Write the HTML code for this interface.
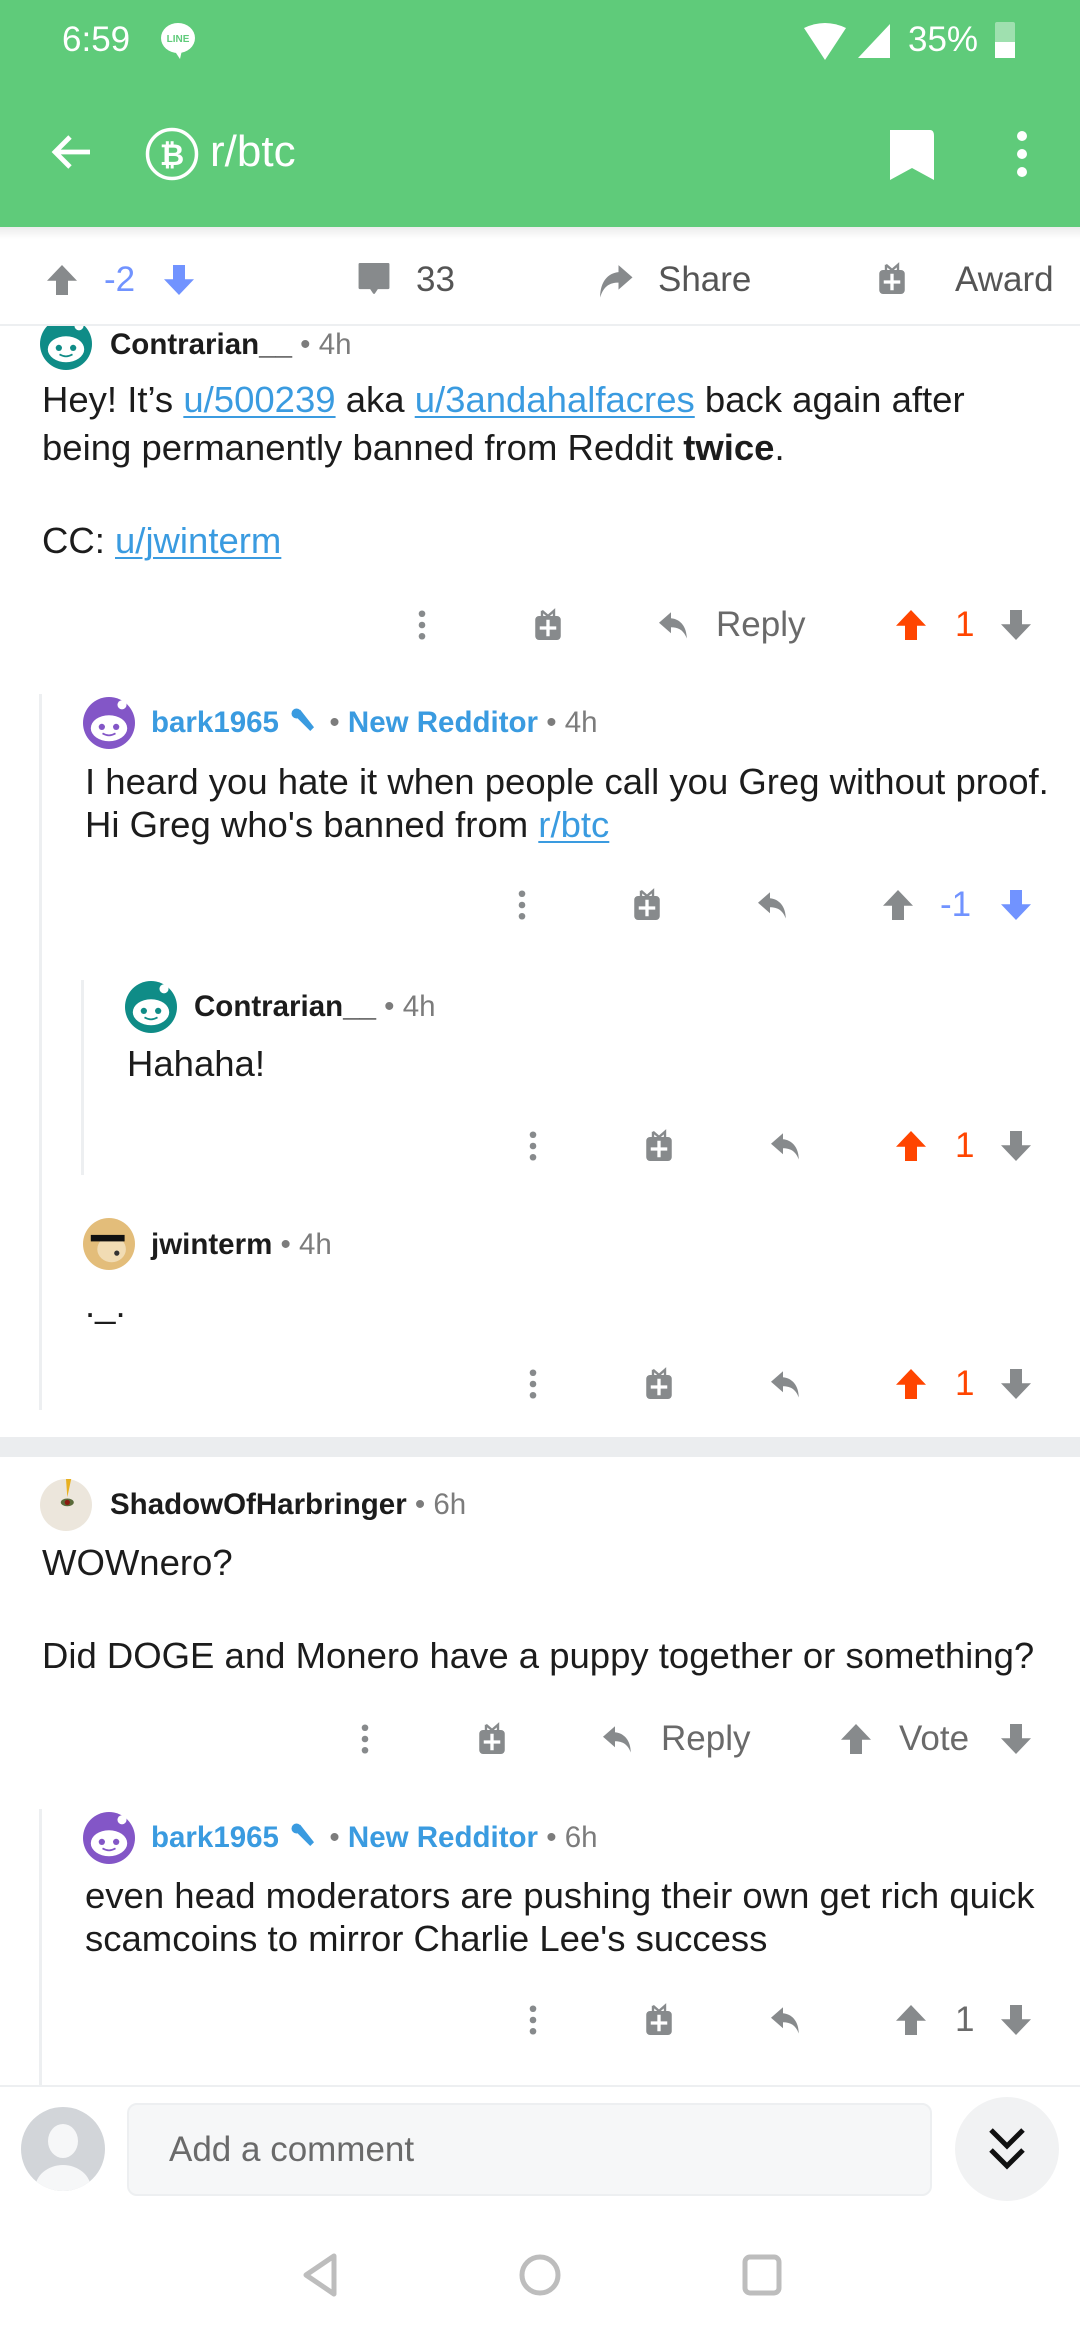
<!DOCTYPE html>
<html><head><meta charset="utf-8">
<style>
*{margin:0;padding:0;box-sizing:border-box}
body{width:1080px;height:2340px;position:relative;overflow:hidden;background:#fff;font-family:"Liberation Sans",Roboto,sans-serif;color:#1c1c1c}
.a{position:absolute;white-space:nowrap}
.t{position:absolute;white-space:nowrap;line-height:48px;font-size:36.5px}
.ab{font-size:35px}
.n{position:absolute;white-space:nowrap;line-height:40px;font-size:29.5px;font-weight:bold;color:#1c1c1c}
.n .g{font-weight:normal;color:#7c7c7c}
.n .b{color:#3a9be0}
a{color:#3a9be0;text-decoration:underline;text-decoration-thickness:2px;text-underline-offset:4px}
.ic{position:absolute;width:36px;height:36px}
.vl{position:absolute;width:3px;background:#edeff1}
</style></head><body>
<svg width="0" height="0" style="position:absolute">
<defs>
<symbol id="up" viewBox="0 0 24 24"><path d="M12 2 L22 12.5 H16 V22 H8 V12.5 H2 Z"/></symbol>
<symbol id="dn" viewBox="0 0 24 24"><path d="M12 22 L22 11.5 H16 V2 H8 V11.5 H2 Z"/></symbol>
<symbol id="gift" viewBox="0 0 24 24"><path d="M8 2.5 L12 6 L16 2.5 V6 M8 2.5 V6" fill="none" stroke="currentColor" stroke-width="1.6"/><rect x="3.5" y="6" width="17" height="16" rx="2.5"/><path d="M12 8.5 V19.5 M6.5 14 H17.5" stroke="#fff" stroke-width="2.2"/></symbol>
<symbol id="rep" viewBox="0 0 24 24"><path d="M10 3.5 L2 10.5 L10 17.5 V13.5 C15 13.5 18.5 15.5 20.5 21 C20.5 13 16 8 10 7.5 Z"/></symbol>
<symbol id="dots" viewBox="0 0 24 24"><circle cx="12" cy="4.5" r="2.2"/><circle cx="12" cy="12" r="2.2"/><circle cx="12" cy="19.5" r="2.2"/></symbol>
<symbol id="snoo" viewBox="0 0 40 40"><ellipse cx="20" cy="24" rx="14" ry="10" fill="#fff"/><circle cx="14.5" cy="23" r="2.4" fill="currentColor"/><circle cx="25.5" cy="23" r="2.4" fill="currentColor"/><path d="M15 28 Q20 31 25 28" fill="none" stroke="currentColor" stroke-width="1.3"/><circle cx="30" cy="6" r="3.5" fill="#fff"/></symbol>
</defs></svg>

<!-- header -->
<div class="a" style="left:0;top:0;width:1080px;height:227px;background:#5fcb7a"></div>
<div class="a" style="left:62px;top:20px;font-size:35px;line-height:40px;color:#fff">6:59</div>
<svg class="a" style="left:160px;top:22px" width="36" height="38" viewBox="0 0 36 38"><ellipse cx="18" cy="16" rx="17" ry="15" fill="#fff"/><path d="M14 28 L20 37 L22 28Z" fill="#fff"/><text x="18" y="20" font-size="10" text-anchor="middle" fill="#5fcb7a" font-family="Liberation Sans" font-weight="bold">LINE</text></svg>
<svg class="a" style="left:800px;top:22px" width="50" height="40" viewBox="0 0 50 40"><path d="M4 6 Q25 -4 46 6 L25 38 Z" fill="#fff"/></svg>
<svg class="a" style="left:856px;top:22px" width="36" height="38" viewBox="0 0 36 38"><path d="M34 2 V36 H2 Z" fill="#fff"/></svg>
<div class="a" style="left:908px;top:20px;font-size:35px;line-height:40px;color:#fff">35%</div>
<div class="a" style="left:995px;top:22px;width:20px;height:36px;background:rgba(255,255,255,.4);border-radius:2px"></div>
<div class="a" style="left:995px;top:42px;width:20px;height:16px;background:#fff"></div>

<svg class="a" style="left:48px;top:128px" width="48" height="48" viewBox="0 0 24 24"><path d="M21 12 H4 M11 4.5 L3.5 12 L11 19.5" fill="none" stroke="#fff" stroke-width="2.4"/></svg>
<svg class="a" style="left:145px;top:127px" width="54" height="54" viewBox="0 0 54 54"><circle cx="27" cy="27" r="24.5" fill="none" stroke="#fff" stroke-width="3.5"/><text x="27" y="38" font-size="30" font-weight="bold" text-anchor="middle" fill="#fff" font-family="Liberation Sans">₿</text></svg>
<div class="a" style="left:210px;top:126px;font-size:44px;line-height:52px;color:#fff">r/btc</div>
<svg class="a" style="left:888px;top:128px" width="46" height="52" viewBox="0 0 46 52"><path d="M2 2 H42 Q46 2 46 8 V52 L24 40 L2 52 Z" fill="#fff"/></svg>
<svg class="a" style="left:1010px;top:130px" width="24" height="48" viewBox="0 0 24 48"><circle cx="12" cy="6" r="5" fill="#fff"/><circle cx="12" cy="24" r="5" fill="#fff"/><circle cx="12" cy="42" r="5" fill="#fff"/></svg>

<!-- post action bar -->
<div class="a" style="left:0;top:227px;width:1080px;height:12px;background:linear-gradient(#ececec,#fff)"></div>
<svg class="ic" style="left:44px;top:262px;color:#878a8c;fill:#878a8c"><use href="#up"/></svg>
<div class="t ab" style="left:104px;top:256px;color:#7193ff">-2</div>
<svg class="ic" style="left:161px;top:262px;fill:#7193ff"><use href="#dn"/></svg>
<svg class="a" style="left:355px;top:260px" width="38" height="40" viewBox="0 0 24 24"><path d="M3 2 H21 V17 H14 L12 20 L10 17 H3 Z" fill="#878a8c" stroke="#878a8c" stroke-linejoin="round" stroke-width="1.5"/></svg>
<div class="t ab" style="left:416px;top:256px;color:#555">33</div>
<svg class="a" style="left:594px;top:258px;fill:#878a8c;transform:scaleX(-1)" width="42" height="44" viewBox="0 0 24 24"><path d="M10 3.5 L2 10.5 L10 17.5 V13.5 C15 13.5 18.5 15.5 20.5 22 C20.5 13 16 8 10 7.5 Z"/></svg>
<div class="t ab" style="left:658px;top:256px;color:#555">Share</div>
<svg class="ic" style="left:874px;top:261px;color:#878a8c;fill:#878a8c"><use href="#gift"/></svg>
<div class="t ab" style="left:955px;top:256px;color:#555">Award</div>
<div class="a" style="left:0;top:324px;width:1080px;height:2px;background:#edeff1"></div>

<!-- content -->
<div class="a" style="left:0;top:326px;width:1080px;height:1759px;overflow:hidden">
<div class="a" style="left:0;top:-326px;width:1080px;height:2400px">

<!-- comment 1 -->
<svg class="a" style="left:40px;top:318px;color:#0f8c87" width="52" height="52" viewBox="0 0 40 40"><circle cx="20" cy="20" r="20" fill="#0f8c87"/><use href="#snoo"/></svg>
<div class="n" style="left:110px;top:325px">Contrarian__ <span class="g">• 4h</span></div>
<div class="t" style="left:42px;top:376px">Hey! It’s <a>u/500239</a> aka <a>u/3andahalfacres</a> back again after</div>
<div class="t" style="left:42px;top:424px">being permanently banned from Reddit <b>twice</b>.</div>
<div class="t" style="left:42px;top:517px">CC: <a>u/jwinterm</a></div>
<svg class="ic" style="left:404px;top:607px;fill:#878a8c"><use href="#dots"/></svg>
<svg class="ic" style="left:530px;top:607px;color:#878a8c;fill:#878a8c"><use href="#gift"/></svg>
<svg class="ic" style="left:656px;top:607px;fill:#878a8c"><use href="#rep"/></svg>
<div class="t ab" style="left:716px;top:601px;color:#6a6a6a">Reply</div>
<svg class="ic" style="left:893px;top:607px;fill:#ff4500"><use href="#up"/></svg>
<div class="t ab" style="left:955px;top:601px;color:#ff4500">1</div>
<svg class="ic" style="left:998px;top:607px;fill:#878a8c"><use href="#dn"/></svg>

<div class="vl" style="left:39px;top:694px;height:716px"></div>
<!-- bark1965 -->
<svg class="a" style="left:83px;top:697px;color:#8356c7" width="52" height="52" viewBox="0 0 40 40"><circle cx="20" cy="20" r="20" fill="#8356c7"/><use href="#snoo"/></svg>
<div class="n" style="left:151px;top:703px"><span class="b">bark1965</span> <svg width="34" height="30" viewBox="0 0 24 24" style="vertical-align:-4px"><path d="M4 5 L9 3 L20 17 L17 20 L6 9 Z" fill="#3a9be0"/><circle cx="6" cy="6" r="4" fill="#3a9be0"/></svg><span class="g"> • </span><span class="b">New Redditor</span><span class="g"> • 4h</span></div>
<div class="t" style="left:85px;top:758px">I heard you hate it when people call you Greg without proof.</div>
<div class="t" style="left:85px;top:801px">Hi Greg who's banned from <a>r/btc</a></div>
<svg class="ic" style="left:504px;top:887px;fill:#878a8c"><use href="#dots"/></svg>
<svg class="ic" style="left:629px;top:887px;color:#878a8c;fill:#878a8c"><use href="#gift"/></svg>
<svg class="ic" style="left:755px;top:887px;fill:#878a8c"><use href="#rep"/></svg>
<svg class="ic" style="left:880px;top:887px;fill:#878a8c"><use href="#up"/></svg>
<div class="t ab" style="left:940px;top:881px;color:#7193ff">-1</div>
<svg class="ic" style="left:998px;top:887px;fill:#7193ff"><use href="#dn"/></svg>

<div class="vl" style="left:81px;top:980px;height:195px"></div>
<!-- Contrarian nested -->
<svg class="a" style="left:125px;top:981px;color:#0f8c87" width="52" height="52" viewBox="0 0 40 40"><circle cx="20" cy="20" r="20" fill="#0f8c87"/><use href="#snoo"/></svg>
<div class="n" style="left:194px;top:987px">Contrarian__ <span class="g">• 4h</span></div>
<div class="t" style="left:127px;top:1040px">Hahaha!</div>
<svg class="ic" style="left:515px;top:1128px;fill:#878a8c"><use href="#dots"/></svg>
<svg class="ic" style="left:641px;top:1128px;color:#878a8c;fill:#878a8c"><use href="#gift"/></svg>
<svg class="ic" style="left:768px;top:1128px;fill:#878a8c"><use href="#rep"/></svg>
<svg class="ic" style="left:893px;top:1128px;fill:#ff4500"><use href="#up"/></svg>
<div class="t ab" style="left:955px;top:1122px;color:#ff4500">1</div>
<svg class="ic" style="left:998px;top:1128px;fill:#878a8c"><use href="#dn"/></svg>

<!-- jwinterm -->
<svg class="a" style="left:83px;top:1218px" width="52" height="52" viewBox="0 0 40 40"><circle cx="20" cy="20" r="20" fill="#e3bd7a"/><ellipse cx="22" cy="24" rx="11" ry="10" fill="#f1dcb4"/><rect x="6" y="13" width="26" height="5" fill="#111"/><circle cx="26" cy="27" r="2" fill="#333"/></svg>
<div class="n" style="left:151px;top:1225px">jwinterm <span class="g">• 4h</span></div>
<div class="t" style="left:85px;top:1281px">._.</div>
<svg class="ic" style="left:515px;top:1366px;fill:#878a8c"><use href="#dots"/></svg>
<svg class="ic" style="left:641px;top:1366px;color:#878a8c;fill:#878a8c"><use href="#gift"/></svg>
<svg class="ic" style="left:768px;top:1366px;fill:#878a8c"><use href="#rep"/></svg>
<svg class="ic" style="left:893px;top:1366px;fill:#ff4500"><use href="#up"/></svg>
<div class="t ab" style="left:955px;top:1360px;color:#ff4500">1</div>
<svg class="ic" style="left:998px;top:1366px;fill:#878a8c"><use href="#dn"/></svg>

<div class="a" style="left:0;top:1437px;width:1080px;height:20px;background:#ebedef"></div>

<!-- Shadow -->
<svg class="a" style="left:40px;top:1479px" width="52" height="52" viewBox="0 0 40 40"><circle cx="20" cy="20" r="20" fill="#ece6dc"/><path d="M20 0 L24 0 L21 14 Z" fill="#e8b020"/><ellipse cx="21" cy="18" rx="5" ry="3" fill="#5a6a3a"/><circle cx="21" cy="18" r="2" fill="#8a1a10"/></svg>
<div class="n" style="left:110px;top:1485px">ShadowOfHarbringer <span class="g">• 6h</span></div>
<div class="t" style="left:42px;top:1539px">WOWnero?</div>
<div class="t" style="left:42px;top:1632px">Did DOGE and Monero have a puppy together or something?</div>
<svg class="ic" style="left:347px;top:1721px;fill:#878a8c"><use href="#dots"/></svg>
<svg class="ic" style="left:474px;top:1721px;color:#878a8c;fill:#878a8c"><use href="#gift"/></svg>
<svg class="ic" style="left:600px;top:1721px;fill:#878a8c"><use href="#rep"/></svg>
<div class="t ab" style="left:661px;top:1715px;color:#6a6a6a">Reply</div>
<svg class="ic" style="left:838px;top:1721px;fill:#878a8c"><use href="#up"/></svg>
<div class="t ab" style="left:899px;top:1715px;color:#6a6a6a">Vote</div>
<svg class="ic" style="left:998px;top:1721px;fill:#878a8c"><use href="#dn"/></svg>

<div class="vl" style="left:39px;top:1809px;height:300px"></div>
<svg class="a" style="left:83px;top:1812px;color:#8356c7" width="52" height="52" viewBox="0 0 40 40"><circle cx="20" cy="20" r="20" fill="#8356c7"/><use href="#snoo"/></svg>
<div class="n" style="left:151px;top:1818px"><span class="b">bark1965</span> <svg width="34" height="30" viewBox="0 0 24 24" style="vertical-align:-4px"><path d="M4 5 L9 3 L20 17 L17 20 L6 9 Z" fill="#3a9be0"/><circle cx="6" cy="6" r="4" fill="#3a9be0"/></svg><span class="g"> • </span><span class="b">New Redditor</span><span class="g"> • 6h</span></div>
<div class="t" style="left:85px;top:1872px">even head moderators are pushing their own get rich quick</div>
<div class="t" style="left:85px;top:1915px">scamcoins to mirror Charlie Lee's success</div>
<svg class="ic" style="left:515px;top:2002px;fill:#878a8c"><use href="#dots"/></svg>
<svg class="ic" style="left:641px;top:2002px;color:#878a8c;fill:#878a8c"><use href="#gift"/></svg>
<svg class="ic" style="left:768px;top:2002px;fill:#878a8c"><use href="#rep"/></svg>
<svg class="ic" style="left:893px;top:2002px;fill:#878a8c"><use href="#up"/></svg>
<div class="t ab" style="left:955px;top:1996px;color:#6a6a6a">1</div>
<svg class="ic" style="left:998px;top:2002px;fill:#878a8c"><use href="#dn"/></svg>
</div></div>

<!-- bottom -->
<div class="a" style="left:0;top:2085px;width:1080px;height:2px;background:#edeff1"></div>
<svg class="a" style="left:21px;top:2107px" width="84" height="84" viewBox="0 0 84 84"><defs><clipPath id="cc"><circle cx="42" cy="42" r="42"/></clipPath></defs><circle cx="42" cy="42" r="42" fill="#d2d5d9"/><g clip-path="url(#cc)" fill="#f6f7f8"><ellipse cx="42" cy="34" rx="15" ry="17"/><ellipse cx="42" cy="82" rx="28" ry="24"/></g></svg>
<div class="a" style="left:127px;top:2103px;width:805px;height:93px;background:#f6f7f8;border:2px solid #edeff1;border-radius:10px"></div>
<div class="a" style="left:169px;top:2126px;font-size:35px;line-height:48px;color:#6a6a6a">Add a comment</div>
<div class="a" style="left:955px;top:2097px;width:104px;height:104px;border-radius:50%;background:#f1f2f3"></div>
<svg class="a" style="left:985px;top:2124px" width="44" height="50" viewBox="0 0 44 50"><path d="M6 6 L22 22 L38 6 M6 26 L22 42 L38 26" fill="none" stroke="#111" stroke-width="5"/></svg>

<svg class="a" style="left:300px;top:2252px" width="40" height="46" viewBox="0 0 40 46"><path d="M34 4 L6 23 L34 42 Z" fill="none" stroke="#bdbdbd" stroke-width="5" stroke-linejoin="round"/></svg>
<svg class="a" style="left:518px;top:2253px" width="44" height="44" viewBox="0 0 44 44"><circle cx="22" cy="22" r="18" fill="none" stroke="#bdbdbd" stroke-width="5"/></svg>
<svg class="a" style="left:741px;top:2253px" width="42" height="44" viewBox="0 0 42 44"><rect x="4" y="4" width="34" height="36" rx="5" fill="none" stroke="#bdbdbd" stroke-width="5"/></svg>
</body></html>
